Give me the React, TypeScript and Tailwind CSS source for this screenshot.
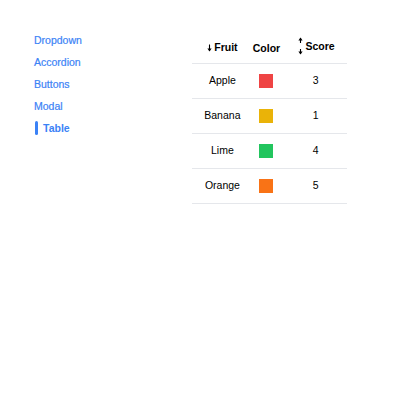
import React from "react";

const rows = [
  { name: "Apple", color: "bg-[#ef4444]", score: 3 },
  { name: "Banana", color: "bg-[#eab308]", score: 1 },
  { name: "Lime", color: "bg-[#22c55e]", score: 4 },
  { name: "Orange", color: "bg-[#f97316]", score: 5 },
];

const links = ["Dropdown", "Accordion", "Buttons", "Modal"];

function DownArrow() {
  return (
    <svg width="5" height="8" viewBox="0 0 5 8" className="shrink-0">
      <path d="M2.5 0.5V7" stroke="#000" strokeWidth="1.1" />
      <path d="M0.4 4.6L2.5 7.5L4.6 4.6Z" fill="#000" />
    </svg>
  );
}

function SortArrows() {
  return (
    <svg width="5" height="18" viewBox="0 0 5 18" className="shrink-0">
      <path d="M2.5 1V6" stroke="#000" strokeWidth="1.1" />
      <path d="M0.4 3.4L2.5 0.5L4.6 3.4Z" fill="#000" />
      <path d="M2.5 12V17" stroke="#000" strokeWidth="1.1" />
      <path d="M0.4 14.6L2.5 17.5L4.6 14.6Z" fill="#000" />
    </svg>
  );
}

export default function App() {
  return (
    <div
      className="w-[400px] h-[400px] bg-white flex pl-[34px] pt-[30px]"
      style={{ fontFamily: "'Liberation Sans', Arial, sans-serif" }}
    >
      <nav className="w-[158px] mt-[3px] flex flex-col gap-[8px] text-[10.5px] leading-[14px] text-[#3b82f6]">
        {links.map((l) => (
          <a key={l} href="#" className="[-webkit-text-stroke:0.2px_#3b82f6]">
            {l}
          </a>
        ))}
        <a href="#" className="flex items-center font-bold">
          <span className="w-[3px] h-[14px] bg-[#3b82f6] rounded-sm ml-px mr-[5px]" />
          Table
        </a>
      </nav>
      <table className="w-[155px] border-collapse text-[10.5px] text-black self-start">
        <thead>
          <tr className="h-[33px] border-b border-[#e5e7eb]">
            <th className="w-[61px] p-0 pt-[5px] font-bold">
              <span className="inline-flex items-center gap-[2px]">
                <DownArrow />
                Fruit
              </span>
            </th>
            <th className="w-[27px] p-0 pt-[5px] font-bold">Color</th>
            <th className="w-[67px] p-0 pl-[5px] pt-[5px] font-bold">
              <span className="inline-flex items-center gap-[3px]">
                <SortArrows />
                Score
              </span>
            </th>
          </tr>
        </thead>
        <tbody>
          {rows.map((r) => (
            <tr key={r.name} className="h-[35px] border-b border-[#e5e7eb]">
              <td className="p-0 text-center">{r.name}</td>
              <td className="p-0">
                <div className={`w-[14px] h-[14px] mx-auto ${r.color}`} />
              </td>
              <td className="p-0 pl-[4px] text-center">{r.score}</td>
            </tr>
          ))}
        </tbody>
      </table>
    </div>
  );
}
